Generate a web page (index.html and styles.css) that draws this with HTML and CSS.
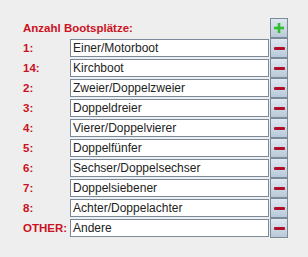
FILE: index.html
```html
<!DOCTYPE html>
<html>
<head>
<meta charset="utf-8">
<link rel="stylesheet" href="styles.css">
</head>
<body>
<div class="panel">
  <div class="grid">
    <div class="head">Anzahl Bootsplätze:</div>
    <button class="btn add" aria-label="add"><svg width="10" height="10" viewBox="0 0 10 10"><rect x="3.7" y="0" width="2.6" height="10" fill="#2ec12e"/><rect x="0" y="3.7" width="10" height="2.6" fill="#2ec12e"/></svg></button>

    <div class="lbl">1:</div><div class="field">Einer/Motorboot</div><button class="btn rem"><span class="minus"></span></button>
    <div class="lbl">14:</div><div class="field">Kirchboot</div><button class="btn rem"><span class="minus"></span></button>
    <div class="lbl">2:</div><div class="field">Zweier/Doppelzweier</div><button class="btn rem"><span class="minus"></span></button>
    <div class="lbl">3:</div><div class="field">Doppeldreier</div><button class="btn rem"><span class="minus"></span></button>
    <div class="lbl">4:</div><div class="field">Vierer/Doppelvierer</div><button class="btn rem"><span class="minus"></span></button>
    <div class="lbl">5:</div><div class="field">Doppelfünfer</div><button class="btn rem"><span class="minus"></span></button>
    <div class="lbl">6:</div><div class="field">Sechser/Doppelsechser</div><button class="btn rem"><span class="minus"></span></button>
    <div class="lbl">7:</div><div class="field">Doppelsiebener</div><button class="btn rem"><span class="minus"></span></button>
    <div class="lbl">8:</div><div class="field">Achter/Doppelachter</div><button class="btn rem"><span class="minus"></span></button>
    <div class="lbl">OTHER:</div><div class="field">Andere</div><button class="btn rem"><span class="minus"></span></button>
  </div>
</div>
</body>
</html>
```
FILE: styles.css
```css
html, body {
  margin: 0;
  padding: 0;
  background: #eeeeee;
}
body {
  width: 308px;
  height: 257px;
  overflow: hidden;
  font-family: "Liberation Sans", Arial, sans-serif;
}
.panel {
  padding: 18px 0 0 23px;
}
.grid {
  display: grid;
  grid-template-columns: 46px 199px 18px;
  grid-auto-rows: 20px;
  column-gap: 1px;
}
.head {
  grid-column: 1 / 3;
  color: #cc1122;
  font-weight: bold;
  font-size: 11.5px;
  line-height: 20px;
  white-space: nowrap;
}
.lbl {
  color: #cc1122;
  font-weight: bold;
  font-size: 11.5px;
  line-height: 20px;
  white-space: nowrap;
}
.field {
  align-self: center;
  height: 18px;
  box-sizing: border-box;
  border: 1px solid #7a8a99;
  background: #ffffff;
  color: #222;
  font-size: 12px;
  line-height: 16px;
  padding: 0 2px;
  white-space: nowrap;
  overflow: hidden;
}
.btn {
  margin: 0;
  padding: 0;
  width: 18px;
  height: 20px;
  box-sizing: border-box;
  border: 1px solid #7a8a99;
  background: linear-gradient(#dfe7f0, #c9d6e3 60%, #b9c8d8);
  display: flex;
  align-items: center;
  justify-content: center;
}
.minus {
  display: block;
  width: 11px;
  height: 3px;
  background: #b0102a;
  border-radius: 1px;
}
```
